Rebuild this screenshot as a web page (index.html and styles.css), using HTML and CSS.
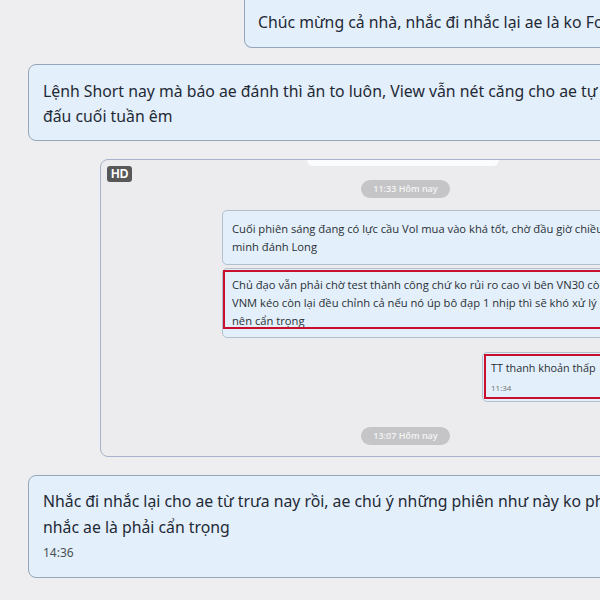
FILE: index.html
```html
<!DOCTYPE html>
<html lang="vi">
<head>
<meta charset="utf-8">
<link rel="stylesheet" href="styles.css">
</head>
<body>
<div class="chat">
  <div class="row row-top">
    <div class="bubble bubble-top">Chúc mừng cả nhà, nhắc đi nhắc lại ae là ko Fo</div>
  </div>
  <div class="row row-msg">
    <div class="bubble bubble-main">
      <div class="line">Lệnh Short nay mà báo ae đánh thì ăn to luôn, View vẫn nét căng cho ae tự</div>
      <div class="line">đấu cuối tuần êm</div>
    </div>
  </div>
  <div class="row row-photo">
    <div class="photo">
      <span class="hd">HD</span>
      <div class="strip"></div>
      <div class="pill pill-first">11:33 Hôm nay</div>
      <div class="inner inner-a">
        <div class="iline">Cuối phiên sáng đang có lực cầu Vol mua vào khá tốt, chờ đầu giờ chiều</div>
        <div class="iline">minh đánh Long</div>
      </div>
      <div class="inner inner-b">
        <div class="redbox">
          <div class="iline">Chủ đạo vẫn phải chờ test thành công chứ ko rủi ro cao vì bên VN30 còn</div>
          <div class="iline">VNM kéo còn lại đều chỉnh cả nếu nó úp bô đạp 1 nhịp thì sẽ khó xử lý nên</div>
          <div class="iline">nên cẩn trọng</div>
        </div>
      </div>
      <div class="inner inner-c">
        <div class="redbox redbox-small">
          <div class="iline iline-big">TT thanh khoản thấp</div>
          <div class="itime">11:34</div>
        </div>
      </div>
      <div class="pill pill-second">13:07 Hôm nay</div>
    </div>
  </div>
  <div class="row row-last">
    <div class="bubble bubble-last">
      <div class="line">Nhắc đi nhắc lại cho ae từ trưa nay rồi, ae chú ý những phiên như này ko ph</div>
      <div class="line">nhắc ae là phải cẩn trọng</div>
      <div class="time">14:36</div>
    </div>
  </div>
</div>
</body>
</html>
```

FILE: styles.css
```css
* { box-sizing: border-box; }
html, body { margin: 0; padding: 0; }
body {
  background: #eeeef0;
  width: 600px;
  height: 600px;
  overflow: hidden;
  font-family: "Noto Sans", "Open Sans", sans-serif;
  color: #1f2a36;
}
.chat {
  display: flex;
  flex-direction: column;
  width: 600px;
  overflow: hidden;
}
.row { display: flex; width: 1200px; }
.bubble {
  background: #e3effa;
  border: 1px solid #94a6ba;
  border-radius: 8px;
  white-space: nowrap;
  font-size: 15.8px;
}
.row-top { padding-left: 244px; }
.bubble-top {
  height: 48px;
  width: 700px;
  border-top: none;
  border-radius: 0 0 8px 8px;
  padding: 10px 14px 0 13px;
  line-height: 24px;
}
.row-msg { padding-left: 28px; margin-top: 16px; }
.bubble-main {
  width: 900px;
  height: 77px;
  padding: 14px 14px 0 14px;
}
.line { line-height: 25px; }
.row-photo { padding-left: 100px; margin-top: 18px; }
.photo {
  position: relative;
  width: 700px;
  height: 298px;
  border: 1px solid #aab3cb;
  border-radius: 8px;
  background: #ececee;
  display: flex;
  flex-direction: column;
  align-items: flex-start;
  font-family: "Open Sans", "Noto Sans", sans-serif;
}
.hd {
  position: absolute;
  left: 6px;
  top: 6px;
  background: #585858;
  color: #fff;
  font: bold 12px/16px "Liberation Sans", Arial, sans-serif;
  padding: 0 4px;
  border-radius: 3px;
}
.strip {
  margin-left: 206px;
  width: 192px;
  height: 6px;
  background: #fbfcfd;
  border-radius: 0 0 6px 6px;
}
.pill {
  margin-left: 260px;
  width: 89px;
  height: 18px;
  border-radius: 9px;
  background: #c5c5c8;
  color: #f4f4f4;
  font-size: 9px;
  font-weight: 600;
  line-height: 18px;
  text-align: center;
}
.pill-first { margin-top: 14px; }
.pill-second { margin-top: 25px; }
.inner {
  margin-left: 121px;
  background: #e3effa;
  border: 1px solid #b3bfcc;
  border-radius: 5px;
  white-space: nowrap;
  width: 500px;
  color: #2a2f36;
}
.iline { font-size: 11.2px; line-height: 18px; }
.inner-a {
  margin-top: 12px;
  height: 55px;
  padding: 9px 10px 0 9px;
}
.inner-b {
  margin-top: 3px;
  height: 70px;
  padding: 1px 0 0 0;
}
.redbox {
  border: 2px solid #c8102e;
  border-right: none;
  padding: 4px 8px 0 7px;
  height: 59px;
  overflow: hidden;
}
.inner-c {
  margin-top: 14px;
  margin-left: 381px;
  height: 50px;
  padding: 1px 0 0 1px;
}
.redbox-small {
  height: 45px;
  padding: 3px 8px 0 5px;
}
.iline-big { font-size: 10.8px; line-height: 17px; }
.itime { font-size: 8px; line-height: 12px; color: #707070; margin-top: 6px; }
.row-last { padding-left: 28px; margin-top: 18px; }
.bubble-last {
  width: 900px;
  height: 103px;
  padding: 12px 14px 0 14px;
}
.bubble-last .line { line-height: 26px; }
.time {
  font-size: 12px;
  line-height: 18px;
  margin-top: 4px;
  color: #4a4f55;
}
```
